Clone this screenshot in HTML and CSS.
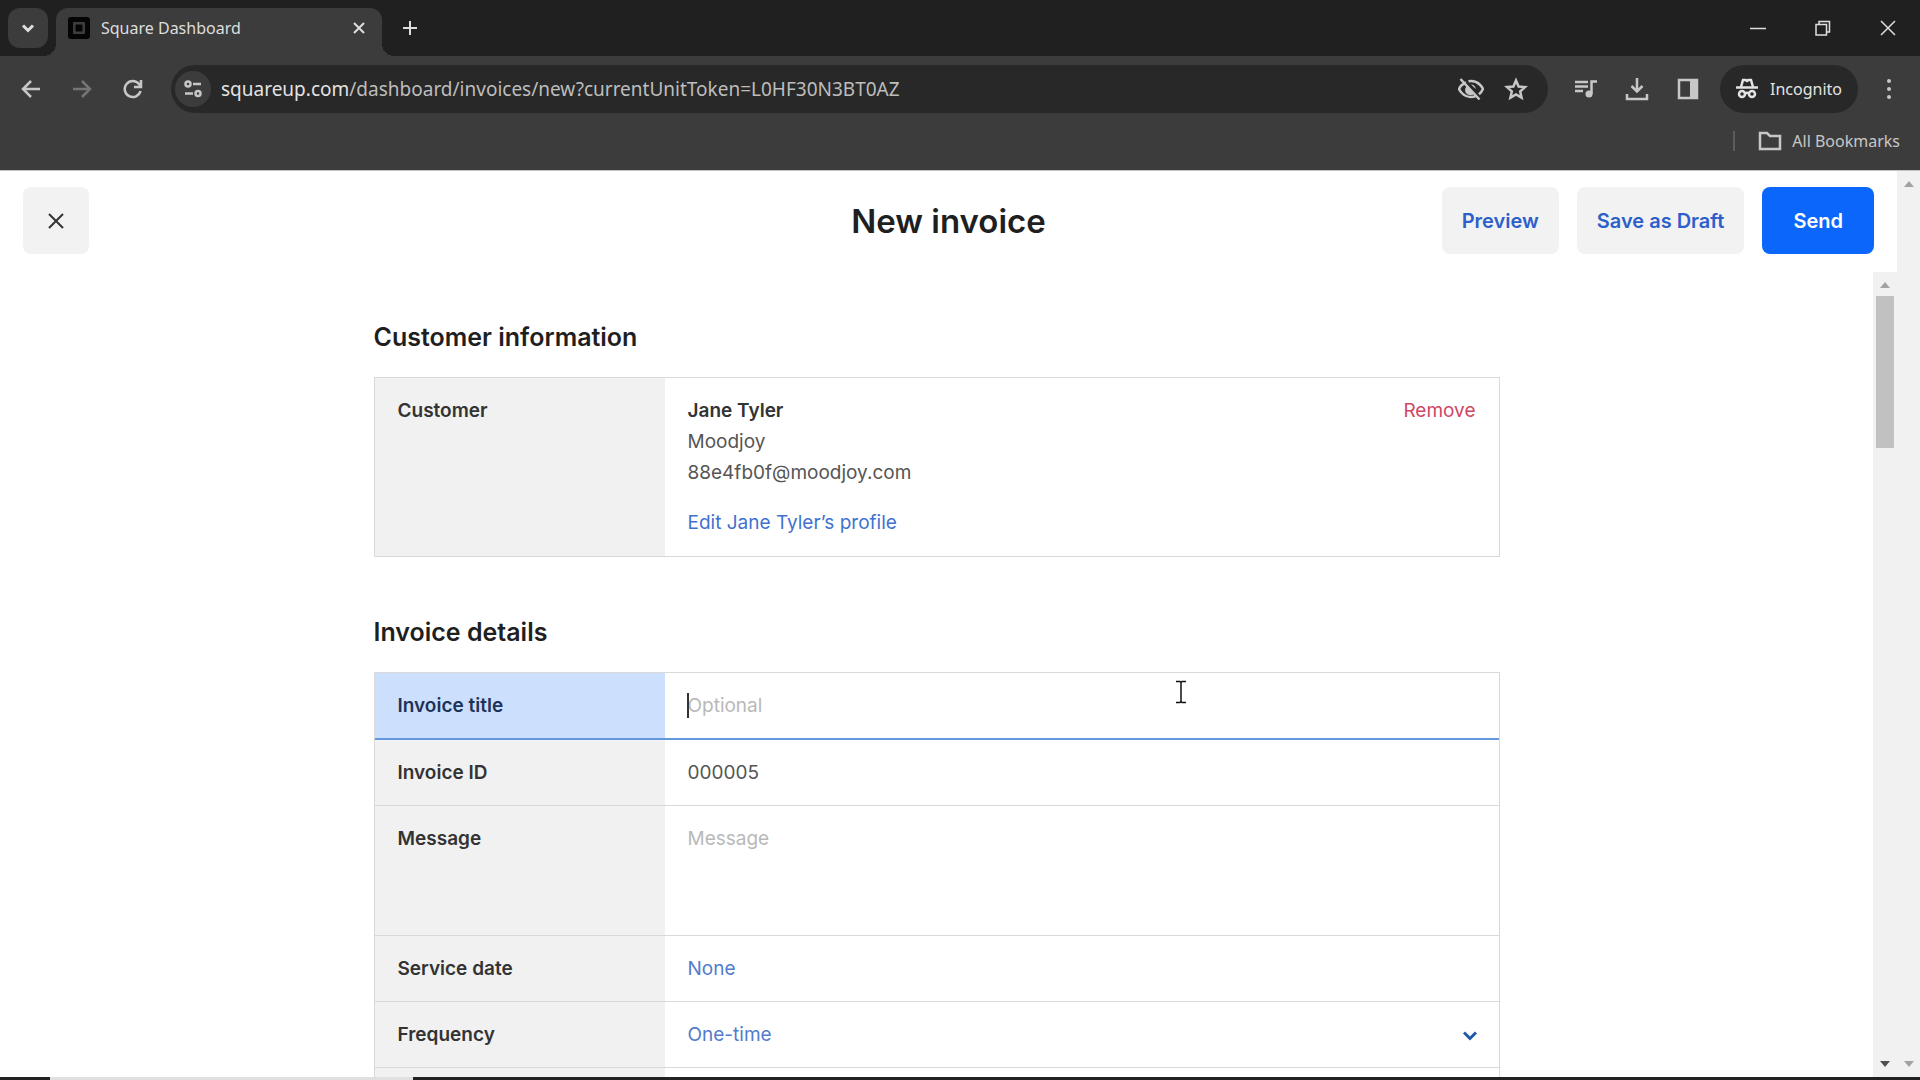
FILE: index.html
```
<!DOCTYPE html>
<html lang="en">

<head>
    <meta charset="UTF-8">
    <meta name="viewport" content="width=device-width, initial-scale=1.0">
    <title>Square Dashboard</title>
    <link rel="stylesheet" href="styles.css">
</head>

<body>
    <div class="tabStrip">
        <button class="tabSearch" aria-label="Search tabs">
            <svg width="14" height="14" viewBox="0 0 14 14"><path d="M2 4.500l5 5 5-5" /></svg>
        </button>
        <div class="tab">
            <svg class="favicon" width="22" height="22" viewBox="0 0 22 22">
                <rect width="22" height="22" rx="3" fill="#050505" />
                <rect x="5" y="5" width="12" height="12" rx="1" fill="#3c3c3c" />
                <rect x="7.500" y="7.500" width="7" height="7" rx="1" fill="#050505" />
            </svg>
            <span class="tabTitle">Square Dashboard</span>
            <button class="tabClose" aria-label="Close tab">
                <svg width="12" height="12" viewBox="0 0 12 12"><path d="M1 1l10 10M11 1L1 11" /></svg>
            </button>
        </div>
        <button class="newTab" aria-label="New tab">
            <svg width="16" height="16" viewBox="0 0 16 16"><path d="M8 1v14M1 8h14" /></svg>
        </button>
        <div class="windowButtons">
            <button aria-label="Minimize">
                <svg width="16" height="16" viewBox="0 0 16 16"><path d="M0 8.500h16" /></svg>
            </button>
            <button aria-label="Restore">
                <svg width="16" height="16" viewBox="0 0 16 16"><path d="M1 4.500h10.500V15H1zM4 4.500V1.500h10.500V12h-3" /></svg>
            </button>
            <button aria-label="Close window">
                <svg width="16" height="16" viewBox="0 0 16 16"><path d="M1 1l14 14M15 1L1 15" /></svg>
            </button>
        </div>
    </div>

    <div class="toolbar">
        <div class="toolbarRow">
            <div class="navButtons">
                <button aria-label="Back">
                    <svg width="20" height="20" viewBox="0 0 20 20"><path d="M19 10H3M10 2l-8 8 8 8" /></svg>
                </button>
                <button aria-label="Forward" disabled>
                    <svg width="20" height="20" viewBox="0 0 20 20"><path d="M1 10h16M10 2l8 8-8 8" /></svg>
                </button>
                <button aria-label="Reload">
                    <svg width="20" height="20" viewBox="0 0 20 20"><path d="M17.500 12a8 8 0 1 1-1.500-7L18 7.500M18 1v7h-7" /></svg>
                </button>
            </div>
            <div class="addressBar">
                <button class="siteInfo" aria-label="Site information">
                    <svg width="20" height="20" viewBox="0 0 20 20">
                        <circle cx="5" cy="5" r="2.500" />
                        <path d="M10 5h8M2 14.500h8" />
                        <circle cx="15" cy="14.500" r="2.500" />
                    </svg>
                </button>
                <a class="url" href="#"><span>squareup.com</span>/dashboard/invoices/new?currentUnitToken=L0HF30N3BT0AZ</a>
                <button aria-label="Third-party cookies blocked">
                    <svg width="26" height="24" viewBox="0 0 26 24">
                        <path d="M8 5.500C2.500 8 1 12 1 12s3.500 8 12 8c2 0 3.500-.4 5-1M10.500 4.300C21 2.500 25 12 25 12s-1.200 3-4 5.300M2.500 2l19 20.500" />
                        <path d="M8.500 9.500a5 5 0 0 0 7.500 7.200zM13 7.500a4.500 4.500 0 0 1 4.700 4.500z" class="solid" />
                    </svg>
                </button>
                <button aria-label="Bookmark this tab">
                    <svg width="24" height="24" viewBox="0 0 24 24"><path d="M12 3.500l2.600 6 6.400.6-4.800 4.300 1.400 6.300L12 17.400l-5.600 3.300 1.400-6.300L3 10.100l6.400-.6z" /></svg>
                </button>
            </div>
            <div class="toolbarActions">
                <button aria-label="Media controls">
                    <svg width="24" height="24" viewBox="0 0 24 24">
                        <path d="M1 5h13M1 9.500h13M1 14h8M17.500 17V4.500H23" />
                        <circle cx="15" cy="17" r="3.500" class="solid" />
                    </svg>
                </button>
                <button aria-label="Downloads">
                    <svg width="24" height="24" viewBox="0 0 24 24"><path d="M12 1v13M6.500 9l5.500 5.500L17.500 9M2 17v5h20v-5" /></svg>
                </button>
                <button aria-label="Side panel">
                    <svg width="24" height="24" viewBox="0 0 24 24">
                        <rect x="3" y="3" width="18" height="18" />
                        <path d="M14 3h7v18h-7z" class="solid" />
                    </svg>
                </button>
            </div>
            <button class="incognito">
                <svg width="22" height="22" viewBox="0 0 22 22">
                    <path d="M0 9.500h22" />
                    <path d="M5 9l2-7h2.500l1.500 1 1.500-1H15l2 7" />
                    <circle cx="6" cy="16" r="3" />
                    <circle cx="16" cy="16" r="3" />
                    <path d="M9 15.500q2-1.500 4 0" />
                </svg>
                Incognito
            </button>
            <button class="menuButton" aria-label="Menu">
                <svg width="6" height="22" viewBox="0 0 6 22">
                    <circle cx="3" cy="3" r="2" class="solid" />
                    <circle cx="3" cy="11" r="2" class="solid" />
                    <circle cx="3" cy="19" r="2" class="solid" />
                </svg>
            </button>
        </div>
        <div class="bookmarkBar">
            <span class="divider"></span>
            <button class="bookmarks">
                <svg width="24" height="20" viewBox="0 0 24 20"><path d="M2 2h7l3 3h10v13H2z" /></svg>
                All Bookmarks
            </button>
        </div>
    </div>

    <div class="page">
        <div class="app">
            <header class="pageHeader">
                <div class="headerSide">
                    <button class="button closeButton" aria-label="Close invoice">
                        <svg width="18" height="18" viewBox="0 0 18 18"><path d="M2 2l14 14M16 2L2 16" /></svg>
                    </button>
                </div>
                <h1>New invoice</h1>
                <div class="headerSide headerActions">
                    <button class="button">Preview</button>
                    <button class="button">Save as Draft</button>
                    <button class="button primary">Send</button>
                </div>
            </header>

            <div class="scrollArea">
                <main class="content">
                    <h2>Customer information</h2>
                    <section class="fieldTable">
                        <div class="fieldRow customerRow">
                            <div class="fieldLabel">Customer</div>
                            <div class="fieldValue">
                                <div class="customer">
                                    <strong>Jane Tyler</strong>
                                    <span>Moodjoy</span>
                                    <span>88e4fb0f@moodjoy.com</span>
                                    <a href="#" class="editLink">Edit Jane Tyler’s profile</a>
                                </div>
                                <button class="remove">Remove</button>
                            </div>
                        </div>
                    </section>

                    <h2>Invoice details</h2>
                    <section class="fieldTable">
                        <div class="fieldRow active">
                            <label class="fieldLabel" for="invoiceTitle">Invoice title</label>
                            <div class="fieldValue">
                                <span class="caret"></span>
                                <input id="invoiceTitle" type="text" placeholder="Optional">
                            </div>
                        </div>
                        <div class="fieldRow">
                            <label class="fieldLabel" for="invoiceId">Invoice ID</label>
                            <div class="fieldValue">
                                <input id="invoiceId" type="text" value="000005">
                            </div>
                        </div>
                        <div class="fieldRow">
                            <label class="fieldLabel" for="message">Message</label>
                            <div class="fieldValue">
                                <textarea id="message" rows="3" placeholder="Message"></textarea>
                            </div>
                        </div>
                        <div class="fieldRow">
                            <label class="fieldLabel" for="serviceDate">Service date</label>
                            <div class="fieldValue">
                                <button id="serviceDate" class="linkButton">None</button>
                            </div>
                        </div>
                        <div class="fieldRow">
                            <label class="fieldLabel" for="frequency">Frequency</label>
                            <div class="fieldValue">
                                <select id="frequency">
                                    <option>One-time</option>
                                    <option>Recurring</option>
                                </select>
                                <svg class="chevron" width="14" height="10" viewBox="0 0 14 10"><path d="M1 1.500l6 6 6-6" /></svg>
                            </div>
                        </div>
                        <div class="fieldRow">
                            <div class="fieldLabel"></div>
                            <div class="fieldValue"></div>
                        </div>
                    </section>
                </main>
                <div class="scrollbar">
                    <span class="arrowUp"></span>
                    <span class="thumb"></span>
                    <span class="arrowDown dark"></span>
                </div>
            </div>
        </div>
        <div class="scrollbar outer">
            <span class="arrowUp"></span>
            <span class="arrowDown"></span>
        </div>
    </div>

    <div class="taskbar"><span class="taskbarSearch"></span></div>

    <svg class="pointer" width="12" height="24" viewBox="0 0 12 24"><path d="M1 1.500h4l1 1 1-1h4M6 2v20M1 22.500h4l1-1 1 1h4" /></svg>
</body>

</html>
```
FILE: styles.css
```
* {
    margin: 0;
    padding: 0;
    box-sizing: border-box;
}

body {
    height: 100vh;
    display: flex;
    flex-direction: column;
    overflow: hidden;
    position: relative;
    background-color: #fff;
    color: #1f1f1f;
    font-family: Inter, "Liberation Sans", sans-serif;
    font-size: 19px;
    line-height: 31px;
}

button,
input,
textarea,
select {
    font: inherit;
    color: inherit;
    border: none;
    outline: none;
    background: none;
}

button {
    display: flex;
    align-items: center;
    justify-content: center;
    cursor: pointer;
}

a {
    text-decoration: none;
}

svg {
    flex-shrink: 0;
    fill: none;
    stroke: currentColor;
    stroke-width: 2;
}

.solid {
    fill: currentColor;
    stroke: none;
}

/* browser tabs */
.tabStrip {
    height: 56px;
    flex-shrink: 0;
    display: flex;
    padding: 8px 0 0 8px;
    background-color: #202020;
    color: #dedede;
    font-family: "Noto Sans", "Open Sans", sans-serif;
    font-size: 16px;
}

.tabSearch {
    width: 40px;
    height: 40px;
    border-radius: 12px;
    background-color: #3c3c3c;
}

.tabSearch svg {
    stroke-width: 3;
}

.tab {
    width: 326px;
    height: 48px;
    display: flex;
    align-items: center;
    position: relative;
    margin-left: 8px;
    padding: 0 17px 8px 12px;
    border-radius: 12px 12px 0 0;
    background-color: #3c3c3c;
}

/* curved feet of the open tab */
.tab::before,
.tab::after {
    content: "";
    position: absolute;
    bottom: 0;
    width: 12px;
    height: 12px;
}

.tab::before {
    right: 100%;
    background: radial-gradient(circle at 0 0, #202020 12px, #3c3c3c 12px);
}

.tab::after {
    left: 100%;
    background: radial-gradient(circle at 100% 0, #202020 12px, #3c3c3c 12px);
}

.favicon {
    stroke: none;
}

.tabTitle {
    flex: 1;
    margin-left: 11px;
    line-height: 24px;
}

.newTab {
    width: 40px;
    height: 40px;
    margin-left: 8px;
}

.windowButtons {
    display: flex;
    margin-left: auto;
    height: 40px;
}

.windowButtons button {
    width: 65px;
}

.windowButtons svg {
    stroke-width: 1.5;
}

/* toolbar */
.toolbar {
    height: 114px;
    flex-shrink: 0;
    background-color: #3c3c3c;
    color: #c7c7c7;
    font-family: "Noto Sans", "Open Sans", sans-serif;
}

.toolbar svg {
    stroke-width: 2.5;
}

.toolbarRow {
    display: flex;
    align-items: center;
    padding: 9px 8px 0 11px;
}

.navButtons {
    display: flex;
    gap: 11px;
}

.navButtons button {
    width: 40px;
    height: 40px;
}

.navButtons button:disabled {
    color: #757575;
}

.addressBar {
    flex: 1;
    height: 48px;
    display: flex;
    align-items: center;
    gap: 20px;
    margin-left: 18px;
    padding: 0 20px 0 4px;
    border-radius: 24px;
    background-color: #282828;
}

.siteInfo {
    width: 36px;
    height: 36px;
    border-radius: 50%;
    background-color: #3c3c3c;
}

.url {
    flex: 1;
    margin-left: -10px;
    font-size: 19px;
    color: #bdbdbd;
    white-space: nowrap;
}

.url span {
    color: #e3e3e3;
}

.toolbarActions {
    display: flex;
    gap: 27px;
    margin: 0 20px 0 26px;
}

.incognito {
    height: 48px;
    gap: 12px;
    padding: 0 16px;
    border-radius: 24px;
    background-color: #282828;
    color: #e3e3e3;
    font-size: 16px;
}

.menuButton {
    width: 46px;
    height: 40px;
    margin-left: 8px;
}

.bookmarkBar {
    height: 56px;
    display: flex;
    align-items: center;
    justify-content: flex-end;
    padding-right: 20px;
}

.divider {
    width: 2px;
    height: 20px;
    margin-right: 23px;
    background-color: #5c5c5c;
}

.bookmarks {
    gap: 10px;
    font-size: 16px;
}

/* page */
.page {
    flex: 1;
    min-height: 0;
    display: flex;
    border-top: 1px solid #c4c4c4;
}

.app {
    flex: 1;
    display: flex;
    flex-direction: column;
}

.pageHeader {
    flex-shrink: 0;
    display: flex;
    align-items: center;
    justify-content: space-between;
    padding: 16px 23px 18px;
}

.headerSide {
    flex: 1;
    display: flex;
}

.headerActions {
    justify-content: flex-end;
    gap: 18px;
}

h1 {
    font-size: 33px;
    font-weight: 600;
    line-height: 40px;
}

.button {
    height: 67px;
    padding: 1px 20px 0;
    border-radius: 8px;
    background-color: #f2f2f2;
    color: #2d5fcb;
    font-size: 20px;
    font-weight: 600;
}

.closeButton {
    width: 66px;
    color: #333;
}

.primary {
    padding: 1px 31px 0;
    background-color: #0b67fb;
    color: #fff;
}

.scrollArea {
    flex: 1;
    min-height: 0;
    display: flex;
    overflow: hidden;
}

.content {
    flex: 1;
    display: flex;
    flex-direction: column;
    align-items: center;
    padding-top: 45px;
}

h2,
.fieldTable {
    width: 90%;
    max-width: 1126px;
}

h2 {
    margin-bottom: 20px;
    font-size: 25px;
    font-weight: 600;
    line-height: 40px;
}

.fieldTable {
    margin-bottom: 55px;
    border: 1px solid #d9d9d9;
}

.fieldRow {
    display: flex;
    min-height: 66px;
    border-bottom: 1px solid #d9d9d9;
}

.fieldRow:last-child {
    border-bottom: none;
}

.fieldLabel {
    width: 290px;
    padding: 17px 23px;
    background-color: #f1f1f1;
    color: #333;
    font-weight: 600;
}

.fieldValue {
    flex: 1;
    display: flex;
    justify-content: space-between;
    align-items: flex-start;
    position: relative;
    padding: 17px 23px;
    color: #555;
}

.fieldRow.active {
    border-bottom: 2px solid #6399dc;
}

.active .fieldLabel {
    background-color: #cce0fd;
    color: #1d3357;
}

.customerRow {
    min-height: 178px;
}

.customer {
    display: flex;
    flex-direction: column;
}

.customer strong {
    color: #333;
    font-weight: 600;
}

.editLink {
    margin-top: 19px;
    color: #3f72cf;
}

.remove {
    color: #cf4765;
}

.fieldValue input,
.fieldValue textarea,
.fieldValue select {
    width: 100%;
    line-height: 31px;
}

.fieldValue input {
    height: 31px;
}

.fieldValue textarea {
    display: block;
    height: 95px;
    resize: none;
}

.fieldValue select {
    appearance: none;
    color: #527bcc;
}

::placeholder {
    color: #b9b9b9;
    opacity: 1;
}

.linkButton {
    color: #527bcc;
}

.chevron {
    position: absolute;
    right: 22px;
    top: 29px;
    color: #1e58a8;
    stroke-width: 3;
}

.caret {
    position: absolute;
    left: 22px;
    top: 20px;
    width: 2px;
    height: 25px;
    background-color: #333;
}

/* scrollbars */
.scrollbar {
    width: 24px;
    flex-shrink: 0;
    display: flex;
    flex-direction: column;
    align-items: center;
    padding: 10px 0;
    background-color: #f1f1f1;
}

.scrollbar.outer {
    width: 23px;
}

.arrowUp,
.arrowDown {
    border: 5px solid transparent;
}

.arrowUp {
    border-top: none;
    border-bottom: 6px solid #a3a3a3;
}

.arrowDown {
    margin-top: auto;
    border-bottom: none;
    border-top: 6px solid #a3a3a3;
}

.arrowDown.dark {
    border-top-color: #505050;
}

.thumb {
    width: 18px;
    height: 152px;
    margin-top: 8px;
    background-color: #c1c1c1;
}

.taskbar {
    height: 3px;
    flex-shrink: 0;
    padding-left: 50px;
    background-color: #222;
}

.taskbarSearch {
    display: block;
    width: 363px;
    height: 3px;
    background-color: #e0e0e0;
}

.pointer {
    position: absolute;
    left: 1175px;
    top: 680px;
    color: #111;
    stroke-width: 1.5;
}
```
